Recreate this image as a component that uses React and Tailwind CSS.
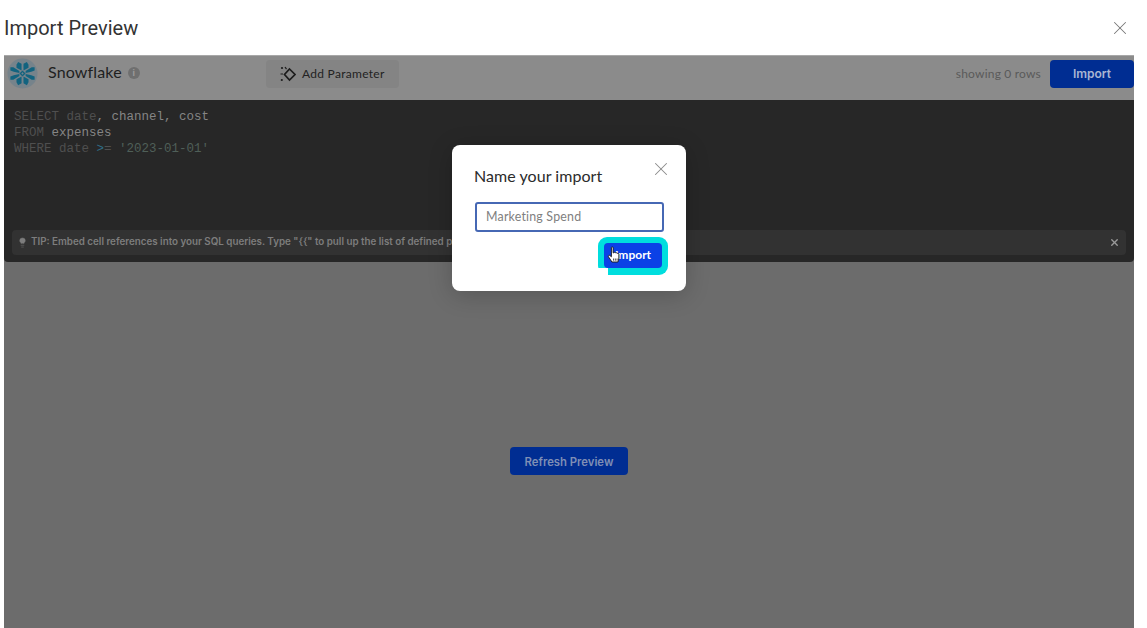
import React from "react";
import { X, Lightbulb } from "lucide-react";

const SnowflakeLogo = () => (
  <svg viewBox="0 0 32 32" className="w-[31px] h-[31px]">
    <circle cx="16" cy="16" r="15.5" fill="#76838b" />
    <g fill="#12637f">
      <path d="M11.5 4 L15 6 V13 L9.8 10 V7 Z" />
      <path d="M20.5 4 L17 6 V13 L22.2 10 V7 Z" />
      <path d="M11.5 28 L15 26 V19 L9.8 22 V25 Z" />
      <path d="M20.5 28 L17 26 V19 L22.2 22 V25 Z" />
      <path d="M3.5 9.5 L6.5 9.5 L12.8 13.5 L12.8 15.5 L7 14.2 L3.5 13 Z" />
      <path d="M28.5 9.5 L25.5 9.5 L19.2 13.5 L19.2 15.5 L25 14.2 L28.5 13 Z" />
      <path d="M3.5 22.5 L6.5 22.5 L12.8 18.5 L12.8 16.5 L7 17.8 L3.5 19 Z" />
      <path d="M28.5 22.5 L25.5 22.5 L19.2 18.5 L19.2 16.5 L25 17.8 L28.5 19 Z" />
      <path d="M16 12.8 L19.2 16 L16 19.2 L12.8 16 Z M16 14.8 L14.8 16 L16 17.2 L17.2 16 Z" fillRule="evenodd" />
    </g>
  </svg>
);

const ParameterIcon = () => (
  <svg viewBox="0 0 16 16" className="w-[16px] h-[16px] text-[#1c1c1c]" fill="none" stroke="currentColor">
    <path d="M9.5 3 L15 8.5 L9.5 14 L4.5 8.5 Z" strokeWidth="1.7" />
    <circle cx="2" cy="2" r="1.1" fill="currentColor" stroke="none" />
    <circle cx="1.8" cy="14" r="1.1" fill="currentColor" stroke="none" />
    <path d="M5 1 L6.5 3.2 M0.5 8 H3" strokeWidth="1.2" />
  </svg>
);

const HandCursor = () => (
  <svg viewBox="0 0 16 20" className="absolute left-[9px] top-[9px] w-[14px] h-[18px]">
    <path
      d="M5 1.5 C5 .6 7 .6 7 1.5 V7.5 L8 7.5 C8.4 6.8 9.6 6.8 10 7.6 C10.5 7.2 11.6 7.4 11.8 8.2 C12.5 7.9 13.6 8.3 13.6 9.2 V13.5 C13.6 15.5 12.8 16.5 12.4 18 H5.6 C4.6 16 2.6 13.5 1.6 12 C1 11 2.4 9.8 3.4 10.6 L5 12 Z"
      fill="#ffffff"
      stroke="#1c1c1c"
      strokeWidth="1.1"
      strokeLinejoin="round"
    />
    <path d="M7.5 14 V16.5 M9.5 14 V16.5 M11.5 14 V16.5" stroke="#1c1c1c" strokeWidth="0.9" />
  </svg>
);

const ImportModal = () => (
  <div className="absolute left-[452px] top-[145px] w-[234px] h-[146px] bg-white rounded-lg shadow-[0_4px_24px_rgba(0,0,0,0.2)] px-[22px] pt-[21px] font-['Lato',sans-serif]">
    <button className="absolute right-[14px] top-[13px] text-[#8a8a8a]">
      <X size={22} strokeWidth={1.1} />
    </button>
    <h3 className="text-[16px] leading-5 text-[#2b2b2b] tracking-[0.05px]">Name your import</h3>
    <div className="mt-[16px] ml-[1px] h-[30px] w-[189px] border-2 border-[#4668b4] rounded-[3px] flex items-center pl-[9px] text-[12.4px] text-[#808080] tracking-[0.2px]">
      Marketing Spend
    </div>
    <div className="flex justify-end mt-[5px] -mr-[4px]">
      <div className="relative w-[70px] h-[38px] bg-[#00dede] rounded-[9px] flex justify-end items-start pt-[6px] pr-[6px]">
        <div className="absolute left-0 bottom-0 w-[10px] h-[7px] bg-white"></div>
        <span className="relative w-[58px] h-[25px] bg-[#0b41e6] rounded-[4px] flex items-center justify-center pb-[2px] text-white text-[12px] font-bold">
          Import
        </span>
        <HandCursor />
      </div>
    </div>
  </div>
);

export default function App() {
  return (
    <div className="relative w-[1147px] h-[628px] overflow-hidden bg-white font-['Inter',sans-serif]">
      <header className="h-[55px] flex items-center justify-between pl-[4px] pr-[16px]">
        <h1 className="text-[20px] leading-6 text-[#333333] font-['Roboto',sans-serif]">Import Preview</h1>
        <X size={22} strokeWidth={1.1} className="text-[#777777]" />
      </header>

      <div className="ml-[4px] w-[1130px] h-[573px] flex flex-col bg-[#6c6c6c]">
        <div className="h-[45px] bg-[#8b8b8b] border-t border-[#a8a8a8] flex items-center pb-[9px]">
          <div className="ml-[3px]">
            <SnowflakeLogo />
          </div>
          <span className="ml-[10px] mb-[3px] text-[16px] text-[#1f1f1f] font-['Lato',sans-serif] tracking-[0.15px]">Snowflake</span>
          <span className="ml-[6px] mb-[1px] w-[12px] h-[12px] rounded-full bg-[#6f6f6f] text-[#9a9a9a] text-[9px] font-bold flex items-center justify-center">i</span>
          <button className="ml-[126px] w-[133px] h-[28px] bg-[#848484] rounded flex items-center justify-center gap-[6px] text-[12px] text-[#222222] font-['Lato',sans-serif] tracking-[0.3px]">
            <ParameterIcon />
            Add Parameter
          </button>
          <span className="ml-auto text-[12px] text-[#5a5a5a] font-['Lato',sans-serif] tracking-[0.2px]">showing 0 rows</span>
          <button className="ml-[9px] w-[84px] h-[28px] bg-[#002d92] rounded text-[12px] font-semibold text-[#a9b5d3]">Import</button>
        </div>

        <div className="h-[162px] bg-[#272727] flex flex-col justify-between pl-[10px] pr-[8px] pt-[9px] pb-[7px] rounded-b-sm">
          <pre className="font-['Liberation_Mono',monospace] text-[12.5px] leading-4 text-[#4f4f4f]">
            <span>SELECT date</span><span className="text-[#858585]">, channel, cost</span>{"\n"}
            <span>FROM</span><span className="text-[#858585]"> expenses</span>{"\n"}
            <span>WHERE date </span><span className="text-[#2f6c86]">&gt;</span><span>= </span><span className="text-[#4f5f58]">'2023-01-01'</span>
          </pre>
          <div className="-ml-[2px] h-[25px] bg-[#323232] rounded flex items-center pl-[5px] pr-[6px] text-[9.8px] font-semibold text-[#7d7d7d]">
            <Lightbulb size={11} fill="currentColor" strokeWidth={1} />
            <span className="ml-[3px] whitespace-nowrap">
              TIP: Embed cell references into your SQL queries. Type "{"{{"}" to pull up the list of defined parameters.
            </span>
            <X size={11} strokeWidth={3} className="ml-auto text-[#9a9a9a]" />
          </div>
        </div>

        <div className="flex-1 flex justify-center pt-[185px]">
          <button className="w-[118px] h-[28px] pt-[2px] bg-[#002d92] rounded text-[11.3px] font-semibold text-[#7f8fb5]">Refresh Preview</button>
        </div>
      </div>

      <ImportModal />
    </div>
  );
}
